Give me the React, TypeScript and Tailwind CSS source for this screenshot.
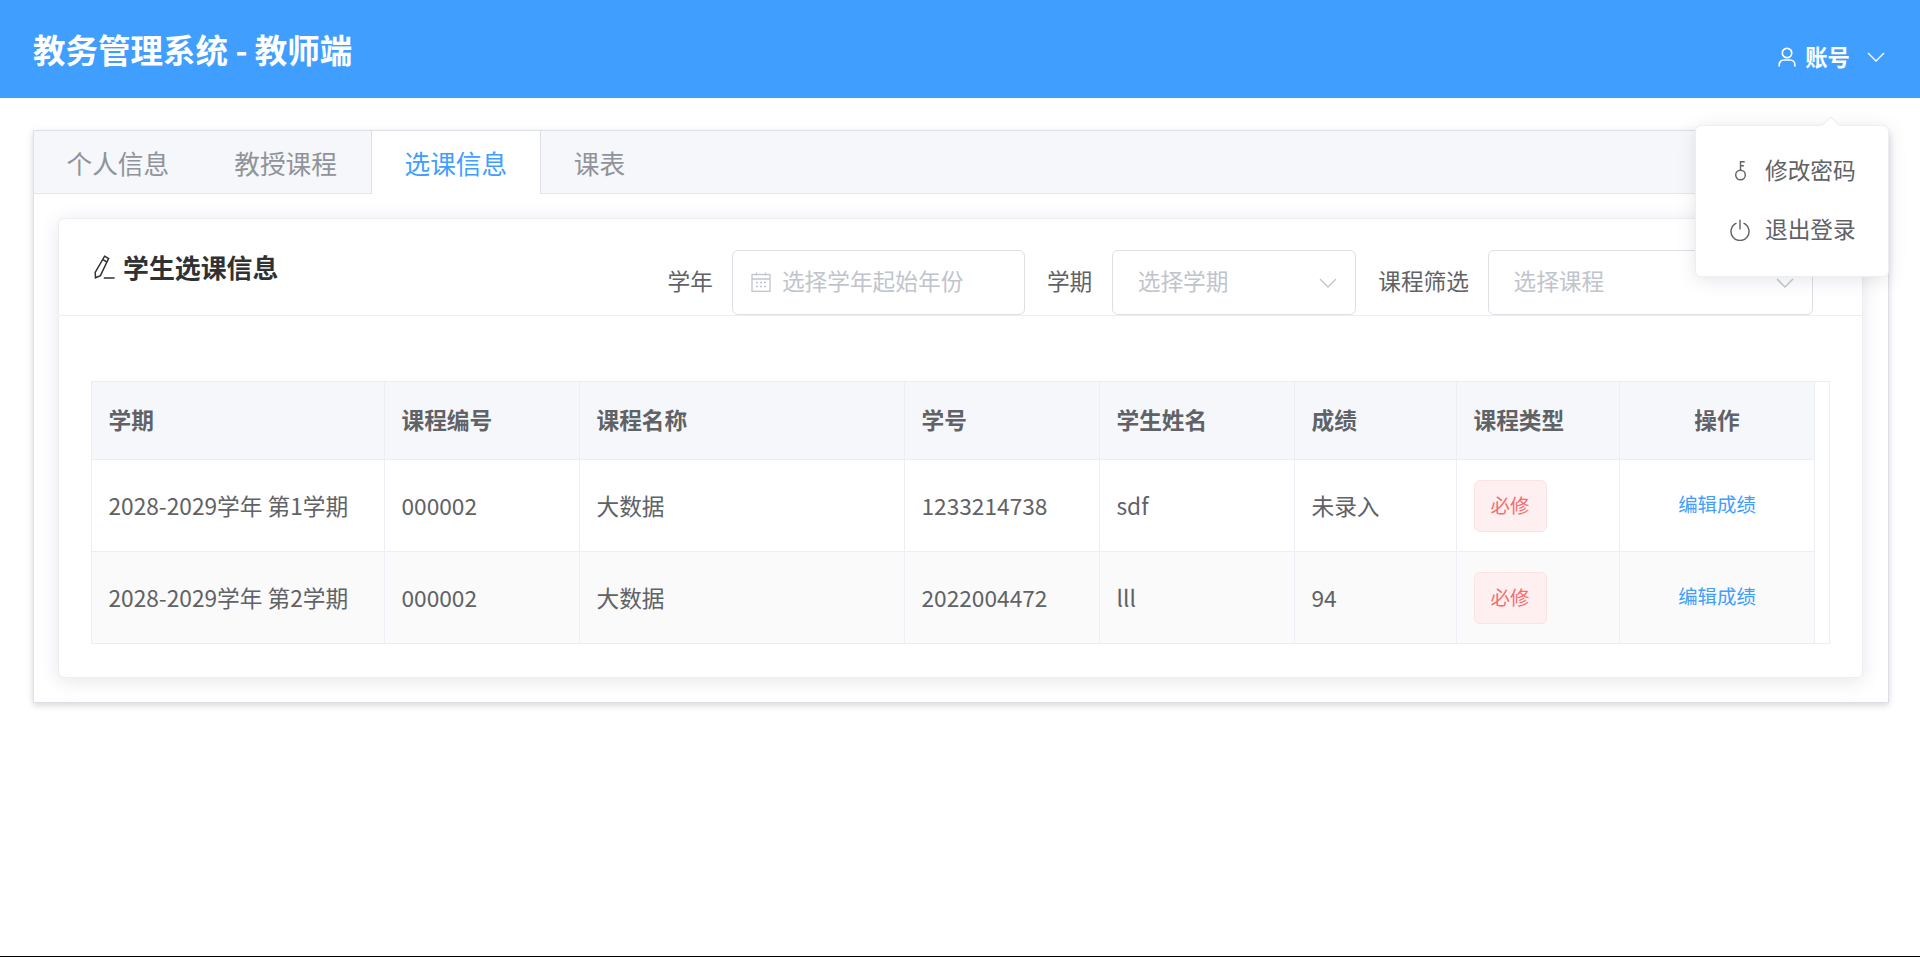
import "react";

const FONT = "font-['Noto_Sans_CJK_SC','Noto_Sans',sans-serif]";

const TABS = [
  { label: "个人信息" },
  { label: "教授课程" },
  { label: "选课信息", active: true },
  { label: "课表" },
];

const COLUMNS = [
  { label: "学期", width: 293 },
  { label: "课程编号", width: 195 },
  { label: "课程名称", width: 325 },
  { label: "学号", width: 195 },
  { label: "学生姓名", width: 195 },
  { label: "成绩", width: 162 },
  { label: "课程类型", width: 163 },
  { label: "操作", width: 195, center: true },
];

const ROWS = [
  { term: "2028-2029学年 第1学期", code: "000002", name: "大数据", sid: "1233214738", student: "sdf", score: "未录入" },
  { term: "2028-2029学年 第2学期", code: "000002", name: "大数据", sid: "2022004472", student: "lll", score: "94" },
];

function Chevron({ className }: { className: string }) {
  return (
    <svg viewBox="0 0 18 10" fill="none" stroke="currentColor" strokeWidth="1.3" className={className}>
      <path d="M1 1l8 8 8-8" />
    </svg>
  );
}

function UserIcon() {
  return (
    <svg viewBox="0 0 18 20" fill="none" stroke="currentColor" strokeWidth="1.7" className="w-[18px] h-[20px]">
      <circle cx="9" cy="6" r="4.7" />
      <path d="M1.2 19.5v-2a4.5 4.5 0 0 1 4.5-4.5h6.6a4.5 4.5 0 0 1 4.5 4.5v2" />
    </svg>
  );
}

function KeyIcon() {
  return (
    <svg viewBox="0 0 13 20" fill="none" stroke="currentColor" strokeWidth="1.4" className="w-[13px] h-[20px]">
      <circle cx="6.5" cy="14" r="4.8" />
      <path d="M6.5 9.2V.8h4.2M6.5 4.8h3.4" />
    </svg>
  );
}

function PowerIcon() {
  return (
    <svg viewBox="0 0 20 22" fill="none" stroke="currentColor" strokeWidth="1.4" className="w-[20px] h-[22px]">
      <path d="M6.5 4.2a9 9 0 1 0 7 0" />
      <path d="M10 .8v9.6" />
    </svg>
  );
}

function PenIcon() {
  return (
    <svg viewBox="0 0 21 24" fill="none" stroke="currentColor" strokeWidth="1.5" className="w-[21px] h-[24px] text-[#303133]">
      <path d="M10.6 1.2l4 2.4L6.4 20.6l-4.9 2.2-.3-5.4z" />
      <path d="M8.9 4.6l4 2.4" />
      <path d="M9.8 23h10.8" />
    </svg>
  );
}

function CalendarIcon() {
  return (
    <svg viewBox="0 0 20 20" fill="none" stroke="currentColor" strokeWidth="1.3" className="w-[20px] h-[20px] text-[#c0c4cc]">
      <rect x="1" y="2.5" width="18" height="16.8" />
      <path d="M1 7h18M5.5 .5v3M14.5 .5v3" />
      <path d="M5 10.5h2M9 10.5h2M13 10.5h2M5 14.5h2M9 14.5h2M13 14.5h2" />
    </svg>
  );
}

function Placeholder({ text, width, icon, chevron }: { text: string; width: string; icon?: boolean; chevron?: boolean }) {
  return (
    <div className={`${width} h-[65px] flex items-center border border-[#dcdfe6] rounded-[6px] bg-white`}>
      {icon ? (
        <span className="ml-[18px] mr-[11px] mb-[2px] flex">
          <CalendarIcon />
        </span>
      ) : (
        <span className="ml-[24.5px]" />
      )}
      <span className="pb-[3px] text-[22.7px] text-[#c0c4cc]">{text}</span>
      {chevron && <Chevron className="ml-auto mr-[18px] w-[18px] h-[10px] text-[#c0c4cc]" />}
    </div>
  );
}

export default function App() {
  return (
    <div className={`${FONT} relative h-[957px] bg-white border-b border-black overflow-hidden`}>
      <header className="h-[98px] bg-[#409eff] text-white flex items-start pl-[33px] pr-[35px]">
        <h1 className="mt-[25px] text-[32.5px] leading-[48px] font-bold">教务管理系统 - 教师端</h1>
        <div className="ml-auto mt-[41px] flex items-center h-[32px]">
          <UserIcon />
          <span className="ml-[9px] text-[22.4px] font-semibold">账号</span>
          <Chevron className="ml-[17px] w-[18px] h-[10px]" />
        </div>
      </header>

      <main className="pt-[32px] pl-[33px] pr-[31px]">
        <section className="border border-[#dcdfe6] bg-white shadow-[0_3px_6px_0_rgba(0,0,0,0.12),0_0_10px_0_rgba(0,0,0,0.04)]">
          <div className="flex h-[63px] bg-[#f5f7fa] border-b border-[#e4e7ed]">
            {TABS.map((t) => (
              <div
                key={t.label}
                className={`h-[63px] leading-[64px] text-[25.7px] ${
                  t.active
                    ? "ml-[1px] px-[33px] bg-white text-[#409eff] border-x border-[#dcdfe6]"
                    : "px-[32.5px] text-[#909399]"
                }`}
              >
                {t.label}
              </div>
            ))}
          </div>

          <div className="pt-[24px] pb-[24px] pl-[24px] pr-[25px]">
            <div className="border border-[#ebeef5] rounded-[6px] bg-white shadow-[0_3px_19px_0_rgba(0,0,0,0.1)]">
              <div className="h-[97px] flex border-b border-[#ebeef5] pl-[35px] pr-[49px]">
                <div className="flex items-center">
                  <PenIcon />
                  <h2 className="ml-[8px] text-[25.9px] font-bold text-[#303133]">学生选课信息</h2>
                </div>
                <div className="ml-auto self-end flex items-center text-[22.7px] text-[#606266]">
                  <span className="pb-[3px] mr-[19px]">学年</span>
                  <Placeholder text="选择学年起始年份" width="w-[293px]" icon />
                  <span className="pb-[3px] ml-[22px] mr-[20px]">学期</span>
                  <Placeholder text="选择学期" width="w-[244px]" chevron />
                  <span className="pb-[3px] ml-[22px] mr-[19px]">课程筛选</span>
                  <Placeholder text="选择课程" width="w-[325px]" chevron />
                </div>
              </div>

              <div className="px-[32px] pt-[65px] pb-[33px]">
                <div className="border border-[#ebeef5]">
                  <table className="table-fixed w-[1723px] border-separate border-spacing-0 text-[22.7px] text-[#606266]">
                    <colgroup>
                      {COLUMNS.map((c) => (
                        <col key={c.label} style={{ width: c.width }} />
                      ))}
                    </colgroup>
                    <thead>
                      <tr>
                        {COLUMNS.map((c) => (
                          <th
                            key={c.label}
                            className={`h-[78px] px-[16.5px] bg-[#f5f7fa] border-r border-b border-[#ebeef5] font-bold ${
                              c.center ? "text-center" : "text-left"
                            }`}
                          >
                            {c.label}
                          </th>
                        ))}
                      </tr>
                    </thead>
                    <tbody>
                      {ROWS.map((r, i) => {
                        const last = i === ROWS.length - 1;
                        const cell = `px-[16.5px] border-r border-[#ebeef5] ${last ? "h-[91px] bg-[#fafafa]" : "h-[92px] border-b"}`;
                        const textCell = `${cell} pt-[2px]`;
                        return (
                          <tr key={r.sid}>
                            <td className={textCell}>{r.term}</td>
                            <td className={textCell}>{r.code}</td>
                            <td className={textCell}>{r.name}</td>
                            <td className={textCell}>{r.sid}</td>
                            <td className={textCell}>{r.student}</td>
                            <td className={textCell}>{r.score}</td>
                            <td className={cell}>
                              <span className="inline-flex items-center justify-center w-[73px] h-[52px] pb-[2px] border border-[#fde2e2] rounded-[6px] bg-[#fef0f0] text-[19.4px] text-[#f56c6c]">
                                必修
                              </span>
                            </td>
                            <td className={`${cell} text-center`}>
                              <span className="relative -top-[2px] text-[19.4px] text-[#409eff]">编辑成绩</span>
                            </td>
                          </tr>
                        );
                      })}
                    </tbody>
                  </table>
                </div>
              </div>
            </div>
          </div>
        </section>
      </main>

      {/* 账号下拉菜单 */}
      <div className="absolute top-[125px] right-[31px] w-[194px] h-[152px] pt-[15px] pl-[34px] border border-[#ebeef5] rounded-[6px] bg-white shadow-[0_3px_19px_0_rgba(0,0,0,0.1)] text-[22.7px] text-[#606266]">
        <span className="absolute -top-[7px] left-[128px] w-[13px] h-[13px] rotate-45 bg-white border-t border-l border-[#ebeef5]" />
        <div className="h-[59px] flex items-center">
          <span className="w-[20px] flex justify-center">
            <KeyIcon />
          </span>
          <span className="ml-[15px]">修改密码</span>
        </div>
        <div className="h-[59px] flex items-center">
          <span className="w-[20px] flex justify-center">
            <PowerIcon />
          </span>
          <span className="ml-[15px]">退出登录</span>
        </div>
      </div>
    </div>
  );
}
